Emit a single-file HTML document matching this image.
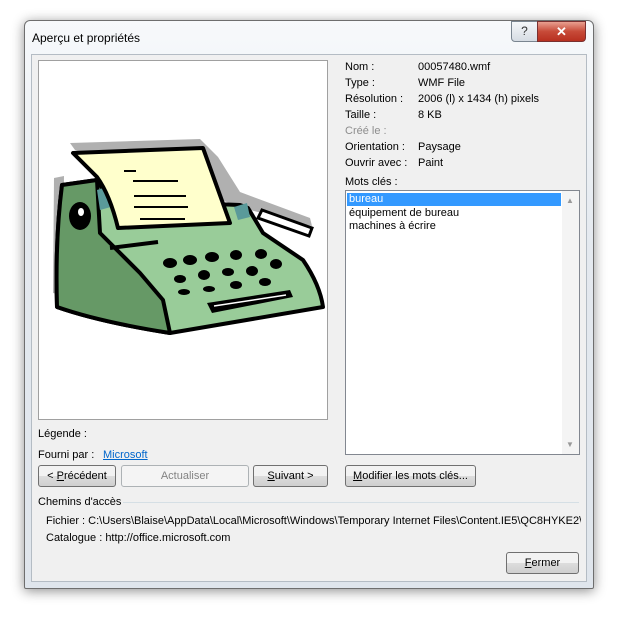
<!DOCTYPE html>
<html><head><meta charset="utf-8"><style>
*{margin:0;padding:0;box-sizing:border-box}
body{width:617px;height:617px;background:#fff;font-family:"Liberation Sans",sans-serif;font-size:11px;color:#000;position:relative;overflow:hidden}
.a{position:absolute;white-space:nowrap}
.win{position:absolute;left:24px;top:20px;width:570px;height:569px;border:1px solid #6e6e6e;border-radius:6px 6px 2px 2px;background:linear-gradient(#f7f9fb,#e4e9ef 40%,#dfe5ec);box-shadow:0 2px 12px rgba(0,0,0,.45)}
.client{position:absolute;left:31px;top:54px;width:556px;height:528px;background:#f0f0f0;border:1px solid #b4bcc4}
.btn{position:absolute;height:22px;border:1px solid #707070;border-radius:3px;background:linear-gradient(#f2f2f2 50%,#dddddd 50%,#cfcfcf);text-align:center;line-height:20px;font-size:11px}
.lbl{position:absolute;left:345px}
.val{position:absolute;left:418px}
</style></head><body>
<div class="win"></div>
<div class="a" style="left:32px;top:31px;font-size:12px">Aperçu et propriétés</div>
<div class="a" style="left:511px;top:21px;width:27px;height:21px;border:1px solid #7a8590;border-radius:0 0 0 4px;background:linear-gradient(#f5f7f9,#d6dce3);text-align:center;font-size:12px;line-height:19px;color:#333">?</div>
<div class="a" style="left:537px;top:21px;width:49px;height:21px;border:1px solid #7a3030;border-radius:0 0 4px 0;background:linear-gradient(#e8a090,#c74a38 50%,#b83020);text-align:center;color:#fff;font-weight:bold;font-size:13px;line-height:19px">✕</div>
<div class="client"></div>
<div class="a" style="left:38px;top:60px;width:290px;height:360px;background:#fff;border:1px solid #a0a0a0"></div>
<svg class="a" style="left:0;top:0" width="617" height="617">
<polygon points="70,143 200,139 218,157 240,192 310,218 312,226 250,210 75,150" fill="#b0b0b0"/>
<polygon points="54,178 64,176 62,295 53,293" fill="#b0b0b0"/>
<path d="M62,185 L97,180 L110,200 L240,205 L248,208 L263,233 L303,260 Q320,285 323,307 L170,333 Q100,322 57,307 Q55,240 62,185Z" fill="#99cc99" stroke="#000" stroke-width="4" stroke-linejoin="round"/>
<path d="M62,185 L97,180 L100,233 L140,273 L163,300 L170,333 Q100,322 57,307 Q55,240 62,185Z" fill="#669966" stroke="#000" stroke-width="4" stroke-linejoin="round"/>
<polygon points="97,190 110,186 118,205 100,210" fill="#5a9a9a"/>
<polygon points="234,207 247,203 250,217 238,220" fill="#5a9a9a"/>
<ellipse cx="80" cy="216" rx="11" ry="14" fill="#000"/>
<ellipse cx="81" cy="212" rx="3" ry="4" fill="#fff"/>
<path d="M73,153 L203,148 L230,223 L118,228 Q110,195 97,177Z" fill="#ffffcc" stroke="#000" stroke-width="4" stroke-linejoin="round"/>
<path d="M124,171h12M133,181h45M134,196h52M134,207h54M140,219h45" stroke="#000" stroke-width="2"/>
<path d="M110,248 L158,242" stroke="#000" stroke-width="4"/>
<polygon points="262,210 312,228 309,236 258,218" fill="#fff" stroke="#000" stroke-width="3"/>
<g fill="#000">
<ellipse cx="170" cy="263" rx="7" ry="5"/><ellipse cx="190" cy="260" rx="7" ry="5"/><ellipse cx="212" cy="257" rx="7" ry="5"/><ellipse cx="236" cy="255" rx="6" ry="5"/><ellipse cx="261" cy="254" rx="6" ry="5"/>
<ellipse cx="276" cy="264" rx="6" ry="5"/><ellipse cx="180" cy="279" rx="6" ry="4"/><ellipse cx="204" cy="275" rx="6" ry="5"/><ellipse cx="228" cy="272" rx="6" ry="4"/><ellipse cx="252" cy="271" rx="6" ry="5"/><ellipse cx="265" cy="282" rx="6" ry="4"/>
<ellipse cx="184" cy="292" rx="6" ry="3"/><ellipse cx="209" cy="289" rx="6" ry="3"/><ellipse cx="236" cy="285" rx="6" ry="4"/>
<polygon points="207,303 290,290 293,297 212,313"/>
</g>
<line x1="214" y1="306" x2="286" y2="295" stroke="#fff" stroke-width="1.5"/>
</svg>
<div class="lbl a" style="top:61px">Nom :</div><div class="val a" style="top:61px">00057480.wmf</div>
<div class="lbl a" style="top:77px">Type :</div><div class="val a" style="top:77px">WMF File</div>
<div class="lbl a" style="top:93px">Résolution :</div><div class="val a" style="top:93px">2006 (l) x 1434 (h) pixels</div>
<div class="lbl a" style="top:109px">Taille :</div><div class="val a" style="top:109px">8 KB</div>
<div class="lbl a" style="top:125px;color:#8d8d8d">Créé le :</div>
<div class="lbl a" style="top:141px">Orientation :</div><div class="val a" style="top:141px">Paysage</div>
<div class="lbl a" style="top:157px">Ouvrir avec :</div><div class="val a" style="top:157px">Paint</div>
<div class="lbl a" style="top:176px">Mots clés :</div>
<div class="a" style="left:345px;top:190px;width:235px;height:265px;background:#fff;border:1px solid #828790"></div>
<div class="a" style="left:562px;top:191px;width:17px;height:263px;background:#f4f4f4"></div>
<div class="a" style="left:566px;top:196px;font-size:8px;color:#999">▲</div>
<div class="a" style="left:566px;top:440px;font-size:8px;color:#999">▼</div>
<div class="a" style="left:347px;top:193px;width:214px;height:13px;background:#3399ff;color:#fff;padding-left:2px;line-height:13px">bureau</div>
<div class="a" style="left:349px;top:207px">équipement de bureau</div>
<div class="a" style="left:349px;top:220px">machines à écrire</div>
<div class="a" style="left:38px;top:428px">Légende :</div>
<div class="a" style="left:38px;top:449px">Fourni par :</div>
<div class="a" style="left:103px;top:449px;color:#0066cc;text-decoration:underline">Microsoft</div>
<div class="btn" style="left:38px;top:465px;width:78px">&lt; <u>P</u>récédent</div>
<div class="btn" style="left:121px;top:465px;width:128px;border-color:#adb2b5;background:#f4f4f4;color:#838383">Actualiser</div>
<div class="btn" style="left:253px;top:465px;width:75px"><u>S</u>uivant &gt;</div>
<div class="btn" style="left:345px;top:465px;width:131px"><u>M</u>odifier les mots clés...</div>
<div class="a" style="left:38px;top:496px">Chemins d'accès</div>
<div class="a" style="left:123px;top:502px;width:456px;height:1px;background:#d5dfe5"></div>
<div class="a" style="left:46px;top:515px;width:535px;overflow:hidden">Fichier : C:\Users\Blaise\AppData\Local\Microsoft\Windows\Temporary Internet Files\Content.IE5\QC8HYKE2\W</div>
<div class="a" style="left:46px;top:532px">Catalogue : http://office.microsoft.com</div>
<div class="btn" style="left:506px;top:552px;width:73px"><u>F</u>ermer</div>
</body></html>
